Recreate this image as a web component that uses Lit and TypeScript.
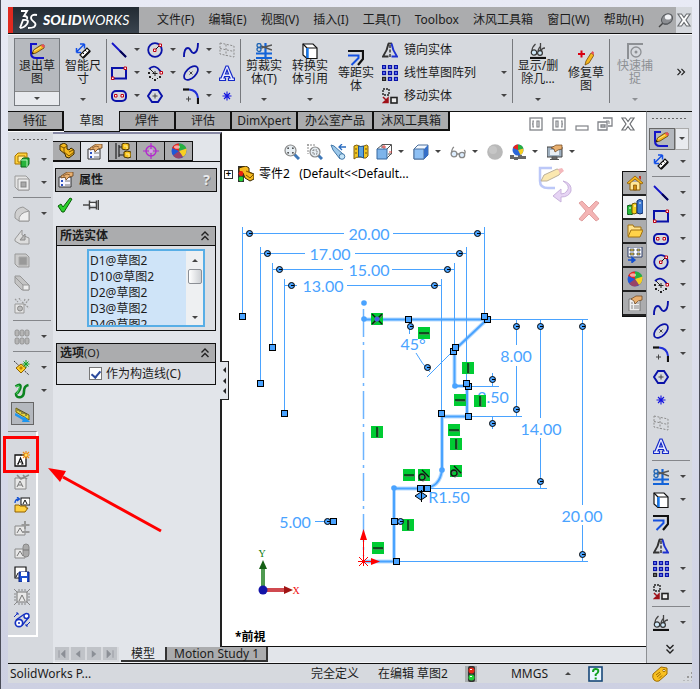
import { LitElement, html, css, svg, nothing } from "lit";
import { customElement } from "lit/decorators.js";
import { classMap } from "lit/directives/class-map.js";

const NAVY = "#0a12a8";

/* Icon bodies, each drawn on a 16 x 16 grid */
const ICONS: Record<string, unknown> = {
  exit: svg`<path d="M8 1H2v9q0 5 5 5h8" fill="none" stroke="#1414c8" stroke-width="2"/><path d="M3 11l1.500-4L12 2l3 0 0 3-8 5z" fill="#f5b820" stroke="#5a3a00" stroke-width=".8"/><path d="M12 2.500l2-1.500 2 2-1.500 2z" fill="#e8505a"/><path d="M3 11l.5-2 1.500 1.500z" fill="#111"/><path d="M5 8l7-4" stroke="#ffe680"/>`,
  dim: svg`<path d="M1.500 9L9 1.500M9.500 1v4.500M9.500 1H5M1.500 9.500V5M1.500 9.500H6" fill="none" stroke="#1450e6" stroke-width="1.500"/><path d="M5 12l7-7 3 3-7 7z" fill="#fff" stroke="#111" stroke-width="1.200"/><path d="M7.500 9.500L9 11M10 7l1.500 1.500" stroke="#111"/><path d="M8 15l7-7" stroke="#111" stroke-width="2"/>`,
  line: svg`<path d="M1 1l14 14" stroke="#1414c8" stroke-width="1.800"/><path d="M9 9l6 6" stroke="#050550" stroke-width="2"/>`,
  rect: svg`<rect x="1" y="3" width="14" height="10.500" fill="none" stroke="${NAVY}" stroke-width="2"/><path d="M13 2h2.500v2.500H13zM.5 12H3v2.500H.5z" fill="#fff" stroke="#c00010"/>`,
  slot: svg`<rect x="1" y="3" width="14" height="10" rx="4" fill="none" stroke="${NAVY}" stroke-width="2"/><path d="M3.500 6.500H6V9H3.500zM10 6.500h2.500V9H10z" fill="#fff" stroke="#c00010"/>`,
  circle: svg`<circle cx="8" cy="8" r="6.800" fill="none" stroke="${NAVY}" stroke-width="1.800"/><path d="M8 8l4-4" stroke="#111"/><path d="M6.500 7H9v2.500H6.500zM12 2h2.500v2.500H12z" fill="#fff" stroke="#c00010"/>`,
  arc: svg`<path d="M2 4q6-6 12 3" fill="none" stroke="${NAVY}" stroke-width="1.800"/><path d="M3 4l5 5M5.500 8.500h5M8 6v5" stroke="#222"/><path d="M13 6.500h2.500V9H13z" fill="#fff" stroke="#c00010"/><path d="M1 7h2v2H1zM2 11h2v2H2zM7 14h2v2H7zM12 11h2v2h-2zM5 13h1v1H5zM10 13h1v1h-1z" fill="#222"/>`,
  spline: svg`<path d="M1 15q0-9 4-9c3 0 3 6 6 5q4-1 4-10" fill="none" stroke="${NAVY}" stroke-width="1.900"/>`,
  ellipse: svg`<ellipse cx="8" cy="8" rx="8.500" ry="4.800" transform="rotate(-45 8 8)" fill="none" stroke="${NAVY}" stroke-width="1.700"/><path d="M6.500 6.500l3 3M9.500 6.500l-3 3" stroke="#333" stroke-width=".9"/>`,
  fillet: svg`<path d="M0 1.500h6" stroke="#111" stroke-width="2.200"/><path d="M6 1.500q8 .5 9 8.500" fill="none" stroke="#2030d8" stroke-width="2"/><path d="M15 10v6" stroke="#111" stroke-width="2.200"/><path d="M3 11h5M5.500 8.500v5" stroke="#444"/>`,
  polygon: svg`<path d="M5 2h6l4 6-4 6H5L1 8z" fill="none" stroke="${NAVY}" stroke-width="1.900"/><path d="M5.500 8h5M8 5.500v5" stroke="#444"/>`,
  point: svg`<path d="M8 3.500v9M3.500 8h9M5 5l6 6M11 5l-6 6" stroke="#1414e0" stroke-width="1.100"/>`,
  plane: svg`<path d="M1 1l14 3v11L1 12zM1 6.500l14 3M7 2.500v11" fill="none" stroke="#8c8c8c" stroke-dasharray="2 1.500"/>`,
  text: svg`<path d="M7 1h2l5 12h1.500v2.500H9.500V13H11l-.6-1.500H5.600L5 13h1.500v2.500H.5V13H2zM8 5L6.500 9h3z" fill="#e8ebff" stroke="#1428c8" stroke-width="1.200" fill-rule="evenodd"/>`,
  trim: svg`<path d="M0 10.500h16M0 15h16M9.500 0v16" stroke="#1464d8" stroke-width="2.200"/><path d="M5 5l11-3M5 3l11 4" stroke="#555" stroke-width="1.600"/><circle cx="3" cy="2.500" r="2" fill="#d6d9de" stroke="#1e64b4" stroke-width="1.300"/><circle cx="3" cy="6.500" r="2" fill="#d6d9de" stroke="#1e64b4" stroke-width="1.300"/>`,
  convert: svg`<path d="M1 1h10l4 4v10.500H5L1 12z" fill="#fff" stroke="#111" stroke-width="1.200"/><path d="M1 1l4 4v10.500M5 5h10" fill="none" stroke="#111" stroke-width="1.200"/><path d="M5.500 5v10" stroke="#1478f0" stroke-width="2.400"/>`,
  offset: svg`<path d="M0 1h15v8l-5 6" fill="none" stroke="#111" stroke-width="2.200"/><path d="M0 5.500h10.500v2.500l-7 7" fill="none" stroke="#1450e0" stroke-width="2"/>`,
  mirror: svg`<path d="M6.500 1.500Q5.500 8 1 14.500h5.500" fill="none" stroke="#333" stroke-width="1.900"/><path d="M6 1.500h4" stroke="#333" stroke-width="1.800"/><path d="M9.500 1.500Q10.500 8 15 14.500H9.500" fill="none" stroke="#1e32d0" stroke-width="1.900"/><path d="M8 3v13" stroke="#111" stroke-dasharray="3 1.500" stroke-width="1.200"/>`,
  pattern: svg`${[0, 6, 12].map((y) => [0, 6, 12].map((x) => svg`<rect x="${x + 0.5}" y="${y + 0.5}" width="3" height="3" fill="${x === 0 && y === 12 ? "#777" : "#6f86ff"}" stroke="${x === 0 && y === 12 ? "#222" : NAVY}" stroke-width="1.300"/>`))}`,
  move: svg`<rect x="1" y="1" width="6" height="6" fill="none" stroke="#222" stroke-width="1.400" stroke-dasharray="2 1"/><rect x="9" y="9.500" width="6" height="5.500" fill="#eee" stroke="#222" stroke-width="1.600"/><path d="M1 9l4 4M6 10v4.500H1.500z" fill="#a01018" stroke="#a01018" stroke-width="1.500"/>`,
  glasses: svg`<path d="M0 15h16" stroke="#111" stroke-width="2.200"/><path d="M2 8q0-4 3.500-7M8 8q1-4 3-5M11.500 8q0-3 3.500-3M10.500 0v9" fill="none" stroke="#444" stroke-width="1.300"/><circle cx="4" cy="9.500" r="2.700" fill="#cfe8f8" stroke="#333" stroke-width="1.200"/><circle cx="10" cy="10" r="2.400" fill="#cfe8f8" stroke="#333" stroke-width="1.200"/>`,
  repair: svg`<path d="M0 4h7M3.500 .5v7" stroke="#d80010" stroke-width="2"/><path d="M7 15l1-4 5-8 3 2-5 8z" fill="#f6b81e" stroke="#7a4a00" stroke-width=".8"/><path d="M13 3l1.500-2L16 2.500 15.500 5z" fill="#e8505a"/>`,
  snap: svg`<path d="M1 16V1h15" fill="none" stroke="#8d9094" stroke-width="2"/><circle cx="9" cy="9" r="5" fill="none" stroke="#8d9094" stroke-width="1.300"/><circle cx="9" cy="9" r="1.500" fill="#8d9094"/>`,
  boss: svg`<path d="M1 4l3-3h9v8l-2 3H1z" fill="#ffd23c" stroke="#a87400"/><path d="M4 4h7v6H4z" fill="#fff1a8" stroke="#a87400"/><path d="M7 8l2-2h6v6l-2 3H7z" fill="#28b43c" stroke="#08641a"/><path d="M7 8h6v7" fill="none" stroke="#b8f5c0"/>`,
  cutbox: svg`<path d="M1 1h11l3 3v11H4l-3-3z" fill="#e4e4e4" stroke="#9a9a9a"/><path d="M4 4h11v11H4z" fill="#ececec" stroke="#9a9a9a"/><rect x="7" y="7" width="5" height="5" fill="#aaa" stroke="#858585"/>`,
  round: svg`<path d="M1 8q1-6 8-7l6 4v10H5l-4-3z" fill="#d0d0d0" stroke="#989898"/><path d="M5 15q-1-8 10-10v10z" fill="#eee" stroke="#989898"/>`,
  rib: svg`<path d="M1 10l7-9v5l7 3v6H6l-5-3z" fill="#ddd" stroke="#989898"/><path d="M6 11l5-6v6z" fill="#bbb" stroke="#8a8a8a"/>`,
  shell: svg`<path d="M1 2h11l3 3v10H4l-3-3z" fill="#ccc" stroke="#999"/><path d="M5 5h8v8H5z" fill="#999" stroke="#aaa"/>`,
  draft: svg`<path d="M1 1h5l9 9v5H8L1 8z" fill="#c4c4c4" stroke="#979797"/><path d="M1 2l8 8h6v5H9v-5" fill="#eee" stroke="#979797"/>`,
  wizard: svg`<path d="M1 6h9v9H1z" fill="#e4e4e4" stroke="#999"/><circle cx="6" cy="10.500" r="2.500" fill="#bbb" stroke="#888"/><path d="M8 4l7 6M1 1l3 3M5 0l2 3M11 1l-1 3M15 1l-3 4" stroke="#999" stroke-width="1.200" stroke-dasharray="2 1"/>`,
  cyls: svg`${[0, 8].map((y) => [1, 6, 11].map((x) => svg`<rect x="${x}" y="${y + 1}" width="4" height="6" rx="1.500" fill="#b5b5b5" stroke="#888" stroke-width=".8"/>`))}`,
  refgeo: svg`<path d="M0 1l15 14" stroke="#333" stroke-dasharray="2 1"/><path d="M2 8l5-4 5 4-5 5z" fill="#ffd02c" stroke="#906000"/><path d="M7 6l2 2-2 2-2-2z" fill="#c08000"/><path d="M12 0v8M8.500 4h7M9.500 1.500l5 5M14.500 1.500l-5 5" stroke="#10a020"/>`,
  curve: svg`<path d="M1.500 3.500Q7 0 6.500 4T2 11q0 4 5 3 3-1 3-6t4.500-6" fill="none" stroke="#0d8420" stroke-width="2.600"/><path d="M2 3.500q4-2 3.500 1T2.500 11" fill="none" stroke="#52d868"/>`,
  instant: svg`<path d="M1 2l13 7v5L1 6z" fill="#e8d438" stroke="#6d6410"/><path d="M3 3v2M5 4v2M7 5v3M9 6v2M11 7v3" stroke="#444"/><path d="M0 8l10 6" stroke="#1c96f0" stroke-width="2.400"/><path d="M9 10l6 6-8 0z" fill="#1c96f0"/>`,
  part: svg`<path d="M1 2l4-2 3 2v4l2 1 2-2 3 2v4l-5 4-3-1-1-3-5-4z" fill="#f5b91e" stroke="#3a2800"/><path d="M1 3l4 2v4l5 4 5-4M5 5l3-2M10 9l4-2" fill="none" stroke="#7a5200"/>`,
  props: svg`<path d="M1 5h12v10H1z" fill="#f5f5ff" stroke="#333"/><path d="M3 8h2v2H3zM3 12h2v2H3z" fill="#2a50c0"/><path d="M7 9h5M7 13h5" stroke="#777"/><path d="M3 4l6-4 6 0v4l-4 1-3 3-1-3-4 1z" fill="#e8b070" stroke="#6a4018" stroke-width=".8"/><path d="M5 4l4-2 3 1" fill="none" stroke="#6a4018" stroke-width=".7"/>`,
  config: svg`<path d="M1 0v16M4 2v12M4 4h4M4 12h5" stroke="#222" stroke-width="1.200"/><path d="M7 1l3-1 4 1v5l-3 1-4-1zM9 9l3-1 4 1v5l-3 1-4-1z" fill="#f8c41c" stroke="#4a3400"/><path d="M9 3h3v3M11 11h3v3" fill="none" stroke="#fff0a0"/>`,
  target: svg`<circle cx="8" cy="8" r="5" fill="none" stroke="#b428d0" stroke-width="1.400"/><path d="M8 0v16M0 8h16" stroke="#b428d0" stroke-width="1.200"/><circle cx="8" cy="8" r="2" fill="#dba0ea"/>`,
  ball: svg`<circle cx="8" cy="8" r="7.500" fill="#1e58d8"/><path d="M8 8L1 5q2-4.500 7-4.500z" fill="#e8261c"/><path d="M8 8V.5q5 0 7.500 5L8 8z" fill="#28b040"/><path d="M8 8l7.500-2.500q.5 6-3.500 8.500z" fill="#f8d020"/><path d="M8 8l4 6q-6 3.500-10-1.500z" fill="#e8361c" opacity=".6"/><ellipse cx="6" cy="4" rx="3" ry="1.800" fill="#fff" opacity=".6"/>`,
  ok: svg`<path d="M1 9l3-2 2 3 7-9 2 1-8 13H5z" fill="#2ad02a" stroke="#0a600a"/>`,
  pin: svg`<path d="M0 8h6" stroke="#555" stroke-width="1.600"/><path d="M6.500 3.500v9M6.500 5.500h7v5h-7M13.500 3.500v9M15.500 3v10" fill="none" stroke="#444" stroke-width="1.500"/><path d="M7 7h5" stroke="#fff" stroke-width="1.500"/>`,
  blocknew: svg`<path d="M1 4h11v11H1z" fill="#fff" stroke="#111" stroke-width="1.300"/><path d="M3 13h2M7 13h2.500M4 13l2.500-6L9 13M5 11h3" fill="none" stroke="#111" stroke-width="1.100"/><path d="M12 0v8M8 4h8M9 1l6 6M15 1L9 7" stroke="#f08a10" stroke-width="1.200"/><circle cx="12" cy="4" r="1.500" fill="#ffe060"/>`,
  blockedit: svg`<path d="M1 4h11v11H1z" fill="#e8e8e8" stroke="#888"/><path d="M3 13l3-6 3 6M4 11h4" fill="none" stroke="#777"/><path d="M3 1l4 4 8-4M9 1l4 4" fill="none" stroke="#8a8a8a" stroke-width="1.600"/>`,
  blockopen: svg`<rect x="7" y="1" width="9" height="7" fill="#fff" stroke="#111"/><path d="M9 7l2-4 2 4" fill="none" stroke="#111"/><path d="M1 6q0-4 4-4M3 0l2.500 2L3 4" fill="none" stroke="#1450d0" stroke-width="1.300"/><path d="M1 15V8h4l1 1h6v2h2l-3 4z" fill="#ffd040" stroke="#906000"/>`,
  blockadd: svg`<path d="M1 6h10v9H1z" fill="#e8e8e8" stroke="#888"/><path d="M3 13l3-5 3 5" fill="none" stroke="#777"/><path d="M11 1v8M7.500 5h8M8 12h7.500" stroke="#999" stroke-width="2"/>`,
  blockbind: svg`<path d="M1 6h10v9H1z" fill="#e8e8e8" stroke="#888"/><path d="M3 13l3-5 3 5" fill="none" stroke="#777"/><rect x="9" y="1" width="6" height="13" rx="3" fill="#aaa" stroke="#888"/><path d="M9 7h6" stroke="#777"/>`,
  blocksave: svg`<path d="M1 1h11v11H1z" fill="#fff" stroke="#111" stroke-width="1.200"/><path d="M2 11l2-4" stroke="#111"/><path d="M5 6h10v10H5z" fill="#1e50d0" stroke="#0a1e78"/><path d="M7 6h6v4H7zM8 12h5v4H8z" fill="#fff"/>`,
  blockburst: svg`<path d="M3 3h10v10H3z" fill="#e8e8e8" stroke="#777"/><path d="M5 12l3-6 3 6" fill="none" stroke="#777"/><path d="M0 0l3 3M16 0l-3 3M0 16l3-3M16 16l-3-3M5 0v2M8 0v2M11 0v2M5 14v2M8 14v2M11 14v2M0 5h2M0 8h2M0 11h2M14 5h2M14 8h2M14 11h2" stroke="#888"/>`,
  belt: svg`<circle cx="5" cy="11" r="3.700" fill="#fff" stroke="#1430c0" stroke-width="1.700"/><circle cx="12.500" cy="4" r="2.500" fill="#fff" stroke="#1430c0" stroke-width="1.400"/><path d="M2 8l8.500-6M8 13.500L15 5" stroke="#1430c0" stroke-width="1.300"/><path d="M0 5l4-4M2 1h2v2M16 10l-4 4M12 12v2h2" fill="none" stroke="#1430c0"/><circle cx="5" cy="11" r="1" fill="#1430c0"/>`,
  zoomfit: svg`<path d="M10 10l5 5" stroke="#3f78b8" stroke-width="3"/><circle cx="6.500" cy="6.500" r="5.500" fill="#e6edf2" stroke="#888" stroke-width="1.200"/><path d="M4 5V4h1M8 4h1v1M9 8v1H8M5 9H4V8" fill="none" stroke="#333" stroke-width="1.200"/>`,
  zoomarea: svg`<path d="M0 1h8M1 0v10" stroke="#888" stroke-dasharray="2 1"/><path d="M11 11l4 4" stroke="#3f78b8" stroke-width="3"/><circle cx="8" cy="8" r="5" fill="#e6edf2" stroke="#888" stroke-width="1.200"/><path d="M6 6h4v4H6z" fill="none" stroke="#777" stroke-dasharray="1.500 1"/>`,
  prev: svg`<path d="M1 1l3 1 9 8-3 5-7-9z" fill="#9cc8ea" stroke="#4478a8"/><circle cx="12" cy="12.500" r="2.800" fill="#c4e4f8" stroke="#4478a8"/><path d="M9 3h7M12 0L9 3l3 3" fill="none" stroke="#2a6cc0" stroke-width="1.300"/>`,
  section: svg`<path d="M1 2q3-2 5 0t5 0 4 0v10q-2 3-4 2t-5-1-5 2z" fill="#f0c420" stroke="#806010"/><path d="M5.500 2v11q2-1 5 1V2q-3 1-5 0z" fill="#5aa2e0" stroke="#22548c"/><path d="M2 5h2M2 9h2M12 5h2M12 9h2" stroke="#7a5400"/>`,
  orient: svg`<path d="M6 4V.5h9.500V10H12M1 5l5-4M11 5l4-4M11 14l4-4" fill="none" stroke="#555"/><path d="M8 1v4M6 3h4M13 8h3" stroke="#d84040"/><path d="M1 5h10v10H1z" fill="#7eb4ea" stroke="#3668a0"/>`,
  display: svg`<path d="M1 5l4-4h10v10l-4 4H1z" fill="#f2f8ff" stroke="#4a6e9c"/><path d="M1 5h10v10H1z" fill="#8ec0f4" stroke="#4a6e9c"/><path d="M11 5l4-4v10l-4 4z" fill="#356fc8"/>`,
  hide: svg`<circle cx="4" cy="10" r="2.900" fill="#ddeeff" stroke="#888" stroke-width="1.300"/><circle cx="12" cy="11" r="2.700" fill="#ddeeff" stroke="#888" stroke-width="1.300"/><path d="M1.500 9Q2 4 4 3M7 10h2M14.500 10Q16 7 14 6" fill="none" stroke="#888" stroke-width="1.300"/>`,
  grayball: svg`<circle cx="8" cy="8" r="7.800" fill="#b9b9b9"/><circle cx="6" cy="6" r="4" fill="#c6c6c6"/>`,
  scene: svg`<path d="M0 11h4v4H0zM8 11h4v4H8zM12 12h4v3h-4zM4 12h4v4H4z" fill="#666"/><path d="M4 11h4v2H4z" fill="#eee"/><circle cx="8" cy="6" r="5.500" fill="#2c66d8"/><path d="M8 6L3 4q2-4 5-3.500z" fill="#e8261c"/><path d="M8 6V.5q4 0 5.500 4z" fill="#28b040"/><path d="M8 6l5.500-1.500q0 5-3 6.500z" fill="#f8d020"/>`,
  screen: svg`<path d="M0 3h15v10H0z" fill="#9fb0c0" stroke="#444"/><path d="M3 6h9v5H3z" fill="#e8eef5"/><path d="M5 13h5v2H5zM3 15.500h9" fill="#777" stroke="#555"/><path d="M4 4l5-3 6 0v4l-4 1-3 2-1-3z" fill="#e8b070" stroke="#6a4018" stroke-width=".7"/>`,
  home: svg`<path d="M3 7v8h10V7" fill="#ffe89a" stroke="#8a5a00"/><path d="M0 8l8-7 8 7-2 1-6-5-6 5z" fill="#f8b81c" stroke="#8a5a00" stroke-width=".8"/><path d="M6.500 10h3v5h-3z" fill="#d08c10" stroke="#7a4a00" stroke-width=".7"/><path d="M12 1h2v4l-2-2z" fill="#c03020"/>`,
  books: svg`<path d="M0 7l3-1 3 1v8l-3 1-3-1z" fill="#28b83c" stroke="#085018"/><path d="M5 5l3-1 2 1v9l-3 1-2-1z" fill="#f4d020" stroke="#705800"/><path d="M10 2l3-2 3 2v12l-3 1-3-1z" fill="#3c78d0" stroke="#102c68"/><path d="M2 9h2M7 7h2M12 4h2" stroke="#fff"/>`,
  folder: svg`<path d="M1 13V2h5l1 2h7v3" fill="#ffe28a" stroke="#a07010"/><path d="M1 14L4 7h12l-3 7z" fill="#ffd34a" stroke="#a07010"/>`,
  views: svg`<path d="M1 0h14v10H1z" fill="#fff" stroke="#2c3c68"/><path d="M3 2h4v2H3zM10 2h3v2h-3zM3 6h4v2H3zM10 6h3v2h-3z" fill="#f0c830" stroke="#2c3c68" stroke-width=".7"/><path d="M1 13h6M5 10.500L8 13l-3 2.500z" fill="#1450d0" stroke="#1450d0" stroke-width="1.400"/>`,
  sheet: svg`<path d="M2 4h11v12H2z" fill="#eee" stroke="#777"/><path d="M4 8h2M4 11h2M4 13h2M7 8h5M7 11h5M7 13h5" stroke="#888"/><path d="M4 4l5-3 6 0v4l-4 1-3 3-1-3z" fill="#e8b070" stroke="#6a4018" stroke-width=".7"/>`,
  tree: svg`<path d="M0 0h6v16H0z" fill="#333"/><circle cx="3" cy="7.500" r="2.200" fill="#e82010"/><path d="M1 2l3-1 4-1 3 2v4l5 2v5l-4 2-5-3-2-5-4-2z" fill="#f5b91e" stroke="#3a2800"/><circle cx="3" cy="7.500" r="2.400" fill="#e82010"/><circle cx="3" cy="13" r="2.400" fill="#20d030"/><path d="M8 5l7 3M8 9l4 3 3-3" fill="none" stroke="#7a5200"/>`,
  light: svg`<rect x="2" y="0" width="12" height="16" fill="#a9adae"/><rect x="5" y="0" width="7" height="16" rx="2" fill="#333"/><circle cx="8.500" cy="4.500" r="3" fill="#e42818"/><circle cx="8.500" cy="11.500" r="3" fill="#22d038"/><path d="M7 3.500h2M7 10.500h2" stroke="#fff"/>`,
  help: svg`<rect x="1" y="1" width="13" height="14" fill="#e8f6ff" stroke="#184878" stroke-width="1.600"/><path d="M5 6q0-3 2.700-3t2.600 2.300Q10.300 7 7.700 8.500v1.500M7.700 11.500v2" fill="none" stroke="#10a020" stroke-width="2"/>`,
  tag: svg`<path d="M1 8l8-7 6 1 0 6-8 7q-3 1-5-1t-1-6z" fill="#f8c020" stroke="#a06c00"/><circle cx="12" cy="4.500" r="1.200" fill="#fff" stroke="#a06c00"/><path d="M4 9l4-3M5 11l4-3.500M7 12.500l3-3" stroke="#a06c00"/>`,
  pushpin: svg`<path d="M1 15l5-5" stroke="#444" stroke-width="1.500"/><ellipse cx="9" cy="7" rx="6" ry="4.800" transform="rotate(-40 9 7)" fill="#8c8e92" stroke="#55585c"/><ellipse cx="10" cy="5" rx="3.200" ry="2.600" fill="#f2f3f6"/><path d="M6 12q4 1 6-2" stroke="#55585c" fill="none"/>`,
  close: svg`<path d="M2 2h3.500L8 5.500 10.500 2H14L10 8l4 6h-3.500L8 10.500 5.500 14H2l4-6z" fill="#fff" stroke="#6c6f73" stroke-width="1.200"/>`,
  paneL: svg`<rect x="2" y="2" width="12" height="12" fill="#fff" stroke="#808388" stroke-width="1.300"/><path d="M6 5H5v6h1M5 8H4M9 5h2v6H9z" fill="none" stroke="#808388" stroke-width="1.200"/>`,
  paneR: svg`<rect x="2" y="2" width="12" height="12" fill="#fff" stroke="#808388" stroke-width="1.300"/><path d="M10 5h1v6h-1M11 8h1M5 5h2v6H5z" fill="none" stroke="#808388" stroke-width="1.200"/>`,
  mini: svg`<rect x="2" y="10" width="12" height="4" fill="#fff" stroke="#808388" stroke-width="1.200"/>`,
  restore: svg`<path d="M6 2h9v8h-4M1 6h9v8H1zM4 9h4v2H4z" fill="none" stroke="#808388" stroke-width="1.300"/><path d="M9 5h3v3" fill="none" stroke="#808388"/>`,
  first: svg`<path d="M4 3v10M12 3L7 8l5 5z" fill="#8b8f96" stroke="#8b8f96"/>`,
  back: svg`<path d="M11 3L5 8l6 5z" fill="#8b8f96"/>`,
  next: svg`<path d="M5 3l6 5-6 5z" fill="#8b8f96"/>`,
  last: svg`<path d="M12 3v10M4 3l5 5-5 5z" fill="#8b8f96" stroke="#8b8f96"/>`,
  chevrons: svg`<path d="M4.500 7.500L8 4l3.500 3.500M4.500 12L8 8.500l3.500 3.500" fill="none" stroke="#222" stroke-width="1.400"/>`,
};

const icon = (name: string, cls = "") =>
  html`<svg class="icon ${cls}" viewBox="0 0 16 16" aria-hidden="true">${ICONS[name]}</svg>`;

/* Toolbar entries: [icon, label, has drop-down]; null is a separator */
type Tool = [string, string, boolean?] | null;

const SKETCH: Tool[] = [
  ["line", "直线", true], ["circle", "圆", true], ["spline", "样条曲线", true], ["plane", "基准面"],
  ["rect", "矩形", true], ["arc", "圆弧", true], ["ellipse", "椭圆", true], ["text", "文字"],
  ["slot", "槽口", true], ["polygon", "多边形"], ["fillet", "圆角", true], ["point", "点"],
];

const FEATURES: Tool[] = [
  ["boss", "拉伸凸台", true], ["cutbox", "拉伸切除", true], null,
  ["round", "圆角", true], ["rib", "筋"], ["shell", "抽壳"], ["draft", "拔模"], ["wizard", "异型孔向导"], null,
  ["cyls", "阵列", true], null,
  ["refgeo", "参考几何体", true], ["curve", "曲线", true],
];

const BLOCKS: Tool[] = [
  ["blocknew", "制作块"], ["blockedit", "编辑块"], ["blockopen", "插入块"], ["blockadd", "添加/移除"],
  ["blockbind", "重建块"], ["blocksave", "保存块"], ["blockburst", "爆炸块"], ["belt", "皮带/链"],
];

const RIGHT: Tool[] = [
  ["dim", "智能尺寸", true], null,
  ["line", "直线", true], ["rect", "矩形", true], ["slot", "槽口", true], ["circle", "圆", true],
  ["arc", "圆弧", true], ["spline", "样条曲线", true], ["ellipse", "椭圆", true], ["fillet", "圆角", true],
  ["polygon", "多边形"], ["point", "点"], ["plane", "基准面"], ["text", "文字"], null,
  ["trim", "剪裁实体", true], ["convert", "转换实体引用", true], ["offset", "等距实体"], ["mirror", "镜向实体"],
  ["pattern", "线性草图阵列", true], ["move", "移动实体", true], null,
  ["glasses", "显示/删除几何关系", true],
];

const HUD: Tool[] = [
  ["zoomfit", "整屏显示全图"], ["zoomarea", "局部放大"], ["prev", "上一视图"], ["section", "剖面视图"],
  ["orient", "视图定向", true], ["display", "显示样式", true], ["hide", "隐藏/显示项目", true],
  ["grayball", "编辑外观"], ["scene", "应用布景", true], ["screen", "视图设定", true],
];

/* Sketch geometry in window coordinates */
const THIN = [
  "M242.500 227V316M242 233.500H344M393 233.500H484M484.500 227V319",
  "M260.500 247V383M260 253.500H305M355 253.500H467M466.500 247V386",
  "M272.500 263V347M272 269.500H343M392 269.500H454M454.500 263V347",
  "M284.500 279V413M284 285.500H297M347 285.500H441M441.500 279V416",
  "M487 319.500H588M468 386.500H499M468 416.500H522M424 488.500H547M396 561.500H588",
  "M516.500 320V345M516.500 366V416M540.500 320V418M540.500 438V488M582.500 320V505M582.500 525V561",
  "M492.500 373V386M492.500 416V429M315 521.500H333M409.500 320V334",
].join("");
const THICK = "M363 319.500H487L454.500 350V386H467V416.500H442V470Q440 487 424 488.500H394V561.500H363";
const SQUARES = [
  [242, 316], [260, 383], [272, 347], [284, 413], [408, 319], [487, 319], [484, 316], [453, 351], [455, 347],
  [468, 386], [466, 383], [468, 416], [441, 413], [420, 488], [427, 488], [394, 521], [396, 561], [333, 521],
];
const HANDLES = [
  [249, 233], [477, 233], [267, 253], [459, 253], [279, 269], [447, 269], [291, 285], [434, 285], [410, 326],
  [516, 326], [540, 326], [582, 326], [516, 409], [540, 481], [582, 554], [492, 379], [492, 423], [427, 367],
  [327, 521], [400, 521],
];
const DOTS = [[364, 303], [364, 319], [455, 386], [442, 470], [394, 488]];
const RELATIONS: [number, number, string][] = [
  [377, 319, "M-5-5L5 5M5-5L-5 5"], [424, 333, "M-5 0H5"], [377, 432, "M0-5V5"], [468, 368, "M0-5V5"],
  [460, 400, "M-5 0H5"], [480, 401, "M0-5V5"], [454, 430, "M-5 0H5"], [456, 444, "M0-5V5"],
  [456, 471, "M-2-5L5 2M-5 2a3 3 0 1 0 6 0a3 3 0 1 0-6 0"], [409, 475, "M-5 0H5"],
  [424, 475, "M-2-5L5 2M-5 2a3 3 0 1 0 6 0a3 3 0 1 0-6 0"], [408, 525, "M0-5V5"], [378, 548, "M-5 0H5"],
];
const DIMS: [number, number, string][] = [
  [369, 240, "20.00"], [330, 260, "17.00"], [369, 276, "15.00"], [323, 292, "13.00"], [413, 350, "45°"],
  [516, 362, "8.00"], [493, 403, "2.50"], [541, 435, "14.00"], [582, 522, "20.00"], [449, 503, "R1.50"],
  [295, 528, "5.00"],
];

@customElement("app-root")
export class AppRoot extends LitElement {
  static styles = css`
    :host {
      display: flex;
      flex-direction: column;
      box-sizing: border-box;
      min-height: 100vh;
      border: solid #4a4c58;
      border-width: 0 1px;
      padding: 7px 7px 6px;
      background: linear-gradient(#e8eaf5, #e2e4f0 30%, #cdd0e2);
      color: #1c1c1c;
      font: 12px/16px "Noto Sans", "Noto Sans CJK SC", sans-serif;
      overflow: hidden;
    }
    * { box-sizing: border-box; }
    button, select, input { font: inherit; color: inherit; margin: 0; padding: 0; border: 0; background: none; }
    .icon { width: 16px; height: 16px; display: block; flex: none; }
    .caret { width: 0; height: 0; border: 3px solid transparent; border-top-color: #444; border-bottom: 0; flex: none; }
    .caret.up { border-top: 0; border-bottom: 3px solid #444; }

    .menubar { display: flex; align-items: stretch; height: 27px; background: #abacae; border-bottom: 1px solid #111; }
    .brand { display: flex; align-items: center; gap: 5px; width: 131px; padding-left: 5px; border-left: 5px solid #e02a20; background: linear-gradient(#222b33, #3a444e); color: #fff; font: italic 14px/16px Lato, sans-serif; }
    .brand svg { width: 20px; height: 20px; }
    .brand b { font-weight: 900; }
    .menus { flex: 1; display: flex; justify-content: space-between; align-items: center; padding: 0 14px 0 18px; }
    .menus button { white-space: nowrap; }
    .sys { display: flex; align-items: center; gap: 2px; }
    .sys button:last-child { background: #d6d9de; align-self: stretch; display: grid; place-items: center; }

    .ribbon { display: flex; align-items: stretch; height: 77px; padding: 3px 4px 5px 6px; background: #d6d9de; border-top: 1px solid #f4f5f8; line-height: 13px; }
    .big { width: 46px; display: flex; flex-direction: column; align-items: center; padding: 5px 2px 0; }
    .big .label { width: 40px; text-align: center; word-break: break-all; }
    .big.wide { width: 50px; }
    .big.wide .label { width: 44px; }
    .big .drop { display: grid; place-items: center; height: 14px; margin-top: auto; align-self: stretch; }
    .big.low { padding-top: 12px; }
    .big.off { color: #8d9094; }
    .big.off .caret { border-top-color: #8d9094; }
    .big.pressed { background: #b6b9be; border: 1px solid #777b80; padding: 4px 1px 0; }
    .big.pressed .drop { margin: auto -1px 0; background: #e8eaee; border-top: 1px solid #888; }
    .rule { width: 1px; background: #77797d; margin: 1px 0 3px; }
    .sketch { display: grid; grid-template-columns: repeat(3, 36px) 20px; grid-template-rows: repeat(3, 23px); padding-left: 4px; width: 133px; }
    .split { display: flex; align-items: center; gap: 7px; }
    .list { width: 133px; display: grid; grid-template-rows: repeat(3, 23px); padding: 0 5px 0 3px; }
    .list button { display: flex; align-items: center; gap: 6px; text-align: left; }
    .list .caret, .more { margin-left: auto; }
    .more .icon { width: 14px; height: 14px; transform: rotate(90deg); }
    .more { align-self: center; }

    .body { flex: 1; display: flex; }
    .left { flex: 1; display: flex; flex-direction: column; min-width: 0; border-top: 1px solid #111; background: #fff; }
    .tabs { display: flex; align-items: flex-start; height: 20px; }
    .tabs button.tab { height: 19px; border: solid #111; border-width: 0 2px 2px 0; background: #abacae; line-height: 16px; white-space: nowrap; }
    .tabs .tab.on { height: 21px; margin-top: -1px; background: #d6d9de; position: relative; border-width: 0 1px 1px 0; }
    .w56 { width: 56px; } .w66 { width: 66px; } .w76 { width: 76px; }
    .winbtns { margin-left: auto; align-self: flex-end; display: flex; gap: 7px; padding-right: 10px; }
    .cols { flex: 1; display: flex; min-height: 0; }
    .side { width: 45px; background: #d6d9de; padding-top: 6px; }
    .grip { height: 3px; margin: 0 4px; background: radial-gradient(circle, #666 1px, transparent 1px) 0 0 / 4px 3px; }
    .side .grip { margin-bottom: 7px; }
    .cell { display: flex; align-items: center; height: 23px; gap: 11px; padding-left: 6px; }
    .hr { height: 8px; padding: 3px 2px 0 5px; }
    .hr::before { content: ""; display: block; height: 1px; background: #85878b; }
    .side .toggle { display: block; margin: 0 3px 6px; width: 23px; height: 23px; padding: 3px; background: #b4b8be; border: 1px solid #666; }
    .blocks { position: relative; width: 30px; padding: 15px 0 4px; border-top: 1px solid #888; border-right: 2px solid #fff; border-bottom: 2px solid #fff; }
    .mark { position: absolute; z-index: 3; left: -5px; top: 4px; width: 160px; height: 110px; overflow: visible; pointer-events: none; }
    .center { flex: 1; display: flex; flex-direction: column; min-width: 0; }
    .work { flex: 1; display: flex; min-height: 0; }

    .panel { position: relative; width: 169px; background: #e2e5ea; border-top: 2px solid #8688a4; border-right: 2px solid #222; padding-top: 7px; }
    .ptabs { display: flex; border-bottom: 1px solid #111; height: 21px; }
    .ptabs button { width: 28px; height: 20px; background: #abacae; border: 1px solid #111; border-left-width: 0; display: grid; place-items: center; }
    .ptabs button.on { background: #e2e5ea; border-bottom: 0; height: 21px; }
    .ptitle { display: flex; align-items: center; gap: 5px; height: 24px; margin: 6px 3px 0 2px; padding: 0 6px 0 2px; background: #abacae; border: 1px solid #111; font-weight: 700; }
    .ptitle span { flex: 1; }
    .ptitle button { font-size: 14px; font-weight: 700; color: #e8eaec; text-shadow: 1px 1px #777; }
    .actions { display: flex; gap: 10px; padding: 5px 4px 13px; }
    .group { margin: 0 4px 12px 3px; border: 1px solid #111; background: #dcdfe4; }
    .group h2 { display: flex; align-items: center; justify-content: space-between; margin: 0; height: 19px; padding: 0 2px 0 3px; background: #abacae; border-bottom: 1px solid #111; font: 700 12px/16px "Noto Sans", "Noto Sans CJK SC", sans-serif; }
    .group h2 small { font-size: 11px; font-weight: 400; }
    .listbox { display: flex; margin: 3px 10px 3px 30px; height: 78px; border: 2px solid #58aee6; background: #cfe4f8; }
    .listbox select { flex: 1; min-width: 0; height: 74px; overflow: hidden; outline: none; appearance: none; font-size: 12px; }
    .listbox option { height: 16px; min-height: 16px; line-height: 16px; padding: 0 1px; }
    .bar { width: 17px; background: #eef0f2; display: flex; flex-direction: column; align-items: center; padding: 8px 0 6px; }
    .thumb { width: 14px; height: 15px; margin: 7px 0 auto; border: 1px solid #8b8f95; border-radius: 2px; background: linear-gradient(90deg, #fff, #cdd0d4); }
    .check { display: flex; align-items: center; gap: 4px; height: 21px; padding-left: 32px; }
    .check input { appearance: none; width: 13px; height: 13px; border: 1px solid #777; background: #fff; display: grid; place-items: center; }
    .check input:checked::after { content: ""; width: 4px; height: 7px; border: solid #2c4a9c; border-width: 0 2px 2px 0; transform: rotate(40deg); }
    .handle { position: absolute; z-index: 2; right: -9px; top: 227px; width: 9px; height: 39px; background: #e2e5ea; border: solid #222; border-width: 1px 1px 1px 0; display: flex; flex-direction: column; align-items: center; justify-content: space-evenly; }
    .handle i { border: 3px solid transparent; border-right-color: #222; border-left: 0; }

    .view { position: relative; flex: 1; min-width: 0; background: #fff; border-bottom: 1px solid #111; display: flex; flex-direction: column; }
    .canvas { position: absolute; inset: 0; width: 100%; height: 100%; }
    .canvas .dim { font: 16px Lato, sans-serif; fill: #4aa3ff; text-anchor: middle; }
    .canvas .axis { font: 10px "Liberation Serif", serif; text-anchor: middle; }
    .hud { position: relative; display: flex; align-items: center; height: 23px; margin: 8px 0 0 62px; }
    .hud .cell { padding: 0; width: 23px; gap: 6px; }
    .hud .cell.more-w { width: 37px; }
    .feature { position: relative; display: flex; align-items: center; gap: 5px; height: 22px; padding-left: 2px; white-space: pre; color: #000; }
    .feature button { width: 9px; height: 9px; border: 1px solid #333; font: 700 9px/7px "Liberation Sans", sans-serif; }
    .corner { position: absolute; right: 46px; top: 34px; display: flex; align-items: flex-start; gap: 6px; }
    .corner svg { display: block; }
    .corner button:last-child { margin-top: 34px; }
    .tasks { position: absolute; right: 0; top: 39px; width: 24px; border: solid #111; border-width: 1px 0 1px 1px; }
    .tasks button { display: grid; place-items: center; width: 23px; height: 24px; background: #abacae; border-bottom: 2px solid #222; }
    .tasks button.on { background: #eef0f3; }
    .viewname { position: relative; margin: auto 0 1px 13px; font-weight: 700; color: #000; }

    .docs { display: flex; height: 16px; background: #e2e5ea; border-bottom: 1px solid #f4f5f8; }
    .docs button { background: #abacae; border: 1px solid #333; border-width: 0 2px 2px 0; padding: 0 7px; line-height: 13px; }
    .docs .nav { display: grid; place-items: center; width: 16px; padding: 0; background: #c0c3c8; border-color: #d8dade; }
    .docs .nav .icon { width: 12px; height: 12px; }
    .docs .nav:first-child { margin-left: 2px; }
    .docs .on { background: #e2e5ea; padding: 0 10px; margin-left: 2px; }

    .right { width: 46px; background: #d6d9de; border-top: 1px solid #111; border-left: 1px solid #8d9094; padding-top: 5px; }
    .right .grip { margin-bottom: 7px; }
    .right .exit { height: 23px; margin: 0 3px 0 2px; padding: 0; gap: 0; }
    .exit button:first-child { width: 26px; height: 22px; padding: 2px 3px; background: #b4b8be; border: 1px solid #666; }
    .exit button:last-child { flex: 1; height: 22px; display: grid; place-items: center; background: #e8eaee; border: 1px solid #aaa; }
    .expand { display: block; margin: 7px auto 0; transform: rotate(180deg); }

    .status { display: flex; align-items: center; height: 20px; background: #d6d9de; border-top: 1px solid #111; padding-left: 2px; }
    .status .app { flex: 1; }
    .status .def { width: 67px; } .status .edit { width: 85px; }
    .status .units { margin: 0 17px 0 32px; }
    .status .up { margin-right: 17px; }
    .status .help { margin-right: 48px; }
    .status .size { width: 10px; height: 10px; margin: 4px 0 0 14px; background: radial-gradient(circle, #999 1px, transparent 1px) 0 0 / 4px 4px; clip-path: polygon(100% 0, 100% 100%, 0 100%); }
  `;

  private strip(tools: Tool[], hud = false) {
    return tools.map((t) =>
      t
        ? html`<div class=${classMap({ cell: true, "more-w": hud && !!t[2] })}>
            <button aria-label=${t[1]}>${icon(t[0])}</button>${t[2] ? html`<span class="caret"></span>` : nothing}
          </div>`
        : html`<div class="hr"></div>`
    );
  }

  private big(name: string, label: string, cls = "", drop = true) {
    return html`<button class="big ${cls}">${icon(name)}<span class="label">${label}</span>${
      drop ? html`<span class="drop"><span class="caret"></span></span>` : nothing
    }</button>`;
  }

  private drawing() {
    return html`<svg class="canvas" aria-label="草图2">
      <g transform="translate(-222 -132)">
        <path d=${THICK} fill="none" stroke="#b9dcff" stroke-width="4" />
        <path d=${THICK} fill="none" stroke="#4aa3ff" stroke-width="2" />
        <path d=${THIN} fill="none" stroke="#4aa3ff" />
        <path d="M363.500 309V556" stroke="#6db4ff" stroke-width="1.500" stroke-dasharray="28 5 3 5" />
        <path d="M416 353Q422 364 430 372M427 377L453 351" fill="none" stroke="#4aa3ff" />
        ${DOTS.map(([x, y]) => svg`<circle cx=${x} cy=${y} r="2.800" fill="#4aa3ff"/>`)}
        ${DIMS.map(([x, y, t]) => svg`<text class="dim" x=${x} y=${y}>${t}</text>`)}
        ${RELATIONS.map(
          ([x, y, d]) => svg`<g transform="translate(${x} ${y})"><path d="M-6-6H6V6H-6z" fill="#00cc33"/><path d=${d} transform="translate(1 1)" fill="none" stroke="#666"/><path d=${d} fill="none" stroke="#111" stroke-width="1.300"/></g>`
        )}
        <circle cx="377" cy="319" r="2.500" fill="#4a60e0" />
        ${SQUARES.map(([x, y]) => svg`<rect x=${x - 2.5} y=${y - 2.5} width="6" height="6" fill="#4aa3ff" stroke="#000"/>`)}
        ${HANDLES.map(([x, y]) => svg`<circle cx=${x + 0.5} cy=${y + 0.5} r="3" fill="#4aa3ff" stroke="#000"/><path d="M${x} ${y + 0.5}h3" stroke="#000"/>`)}
        <path d="M415 496l6-4 6 4-6 4zM421.500 490v12" fill="#4aa3ff" stroke="#000" />
        <path d="M363.500 561V540M363 561.500H372M359 557l9 9M368 557l-9 9M363.500 556v10M358 561.500h10" stroke="#f00" />
        <path d="M363.500 529l3.500 11h-7zM380 561.500l-9-3.500v7z" fill="#f00" />
        <path d="M263 588V568" stroke="#4f9a50" stroke-width="4" /><path d="M263 560l4 9h-8z" fill="#156015" />
        <path d="M266 590h18" stroke="#d04a50" stroke-width="4" /><path d="M293 590l-9-4v8z" fill="#a01414" />
        <circle cx="263" cy="590" r="4.500" fill="#1414a8" />
        <text class="axis" x="262" y="557" fill="#0a780a">Y</text>
        <text class="axis" x="296" y="594" fill="#f01010">X</text>
      </g>
    </svg>`;
  }

  render() {
    const menus = ["文件(F)", "编辑(E)", "视图(V)", "插入(I)", "工具(T)", "Toolbox", "沐风工具箱", "窗口(W)", "帮助(H)"];
    const tabs: [string, string][] = [
      ["特征", "w56"], ["草图", "w56 on"], ["焊件", "w56"], ["评估", "w56"],
      ["DimXpert", "w66"], ["办公室产品", "w76"], ["沐风工具箱", "w76"],
    ];
    return html`
      <header class="menubar">
        <div class="brand">
          <svg viewBox="0 0 20 20" aria-hidden="true"><path d="M3 1h6l-3 5q4 0 3 3M2 18l3-8q7-1 4 4-3 4-7 4M19 5q-6-1-6 3 0 2 3 4t0 5q-2 1-6 1" fill="none" stroke="#fff" stroke-width="1.900" /></svg>
          <span><b>SOLID</b>WORKS</span>
        </div>
        <nav class="menus">${menus.map((m) => html`<button>${m}</button>`)}</nav>
        <div class="sys">
          <button aria-label="固定菜单">${icon("pushpin")}</button>
          <button aria-label="关闭">${icon("close")}</button>
        </div>
      </header>

      <section class="ribbon">
        ${this.big("exit", "退出草图", "pressed")} ${this.big("dim", "智能尺寸")}
        <div class="rule"></div>
        <div class="sketch">
          ${SKETCH.map((t) => t && html`<div class="split"><button aria-label=${t[1]}>${icon(t[0])}</button>${t[2] ? html`<span class="caret"></span>` : nothing}</div>`)}
        </div>
        <div class="rule"></div>
        ${this.big("trim", "剪裁实体(T)")} ${this.big("convert", "转换实体引用")} ${this.big("offset", "等距实体", "low", false)}
        <div class="list">
          <button>${icon("mirror")}镜向实体</button>
          <button>${icon("pattern")}线性草图阵列<span class="caret"></span></button>
          <button>${icon("move")}移动实体<span class="caret"></span></button>
        </div>
        <div class="rule"></div>
        ${this.big("glasses", "显示/删除几...", "wide")} ${this.big("repair", "修复草图", "low", false)}
        <div class="rule"></div>
        ${this.big("snap", "快速捕捉", "wide off")}
        <button class="more" aria-label="更多">${icon("chevrons")}</button>
      </section>

      <div class="body">
        <div class="left">
          <div class="tabs">
            ${tabs.map(([t, c]) => html`<button class="tab ${c}">${t}</button>`)}
            <div class="winbtns">
              ${["paneL", "paneR", "mini", "restore", "close"].map((n) => html`<button aria-label=${n}>${icon(n)}</button>`)}
            </div>
          </div>
          <div class="cols">
            <aside class="side">
              <div class="grip"></div>
              ${this.strip(FEATURES)}
              <button class="toggle" aria-label="Instant3D">${icon("instant")}</button>
              <div class="blocks">
                ${this.strip(BLOCKS)}
                <svg class="mark" aria-hidden="true">
                  <rect x="1.500" y="1.500" width="33" height="34" fill="none" stroke="#f00" stroke-width="3" />
                  <path d="M158 95L60 41" stroke="#f00" stroke-width="3" /><path d="M45 32l18 3-6 11z" fill="#f00" />
                </svg>
              </div>
            </aside>
            <div class="center">
              <div class="work">
                <section class="panel">
                  <div class="ptabs">
                    ${["part", "props", "config", "target", "ball"].map((n) => html`<button class=${classMap({ on: n === "props" })} aria-label=${n}>${icon(n)}</button>`)}
                  </div>
                  <div class="ptitle">${icon("props")}<span>属性</span><button>?</button></div>
                  <div class="actions">
                    <button aria-label="确定">${icon("ok")}</button><button aria-label="保持可见">${icon("pin")}</button>
                  </div>
                  <div class="group">
                    <h2>所选实体${icon("chevrons")}</h2>
                    <div class="listbox">
                      <select multiple size="4" aria-label="所选实体">
                        ${["D1", "D10", "D2", "D3", "D4"].map((d) => html`<option>${d}@草图2</option>`)}
                      </select>
                      <div class="bar"><span class="caret up"></span><span class="thumb"></span><span class="caret"></span></div>
                    </div>
                  </div>
                  <div class="group">
                    <h2><span>选项<small>(O)</small></span>${icon("chevrons")}</h2>
                    <label class="check"><input type="checkbox" checked />作为构造线(C)</label>
                  </div>
                  <div class="handle"><i></i><i></i><i></i></div>
                </section>
                <main class="view">
                  ${this.drawing()}
                  <div class="hud">${this.strip(HUD, true)}</div>
                  <div class="feature"><button aria-label="展开">+</button>${icon("tree")}<span>零件2   (Default&lt;&lt;Default...</span></div>
                  <div class="corner">
                    <button aria-label="退出草图">
                      <svg width="34" height="38" viewBox="0 0 34 38"><path d="M14 2H2v13q0 7 8 7h7" fill="none" stroke="#bcc8f8" stroke-width="2.500" /><path d="M3 15l3-6L19 3l5 2-3 4-12 6z" fill="#fbe8b0" stroke="#bbb09a" /><path d="M20 3l4-1 2 3-4 3z" fill="#f4b8bc" /><path d="M25 15q8 5 4 10-2 3-6 3v-5l-8 7 8 6v-5q8 0 10-6 1-8-8-10z" fill="#e6d4f4" stroke="#c8b2dc" /></svg>
                    </button>
                    <button aria-label="取消">
                      <svg width="22" height="22" viewBox="0 0 22 22"><path d="M1 3l3-2 7 7 7-7 3 2-7 8 7 8-3 2-7-7-7 7-3-2 7-8z" fill="#f4b4b4" stroke="#e0a0a0" /></svg>
                    </button>
                  </div>
                  <div class="tasks">
                    ${["home", "books", "folder", "views", "ball", "sheet"].map((n) => html`<button class=${classMap({ on: n === "books" })} aria-label=${n}>${icon(n)}</button>`)}
                  </div>
                  <div class="viewname">*前視</div>
                </main>
              </div>
              <div class="docs">
                ${["first", "back", "next", "last"].map((n) => html`<button class="nav" aria-label=${n}>${icon(n)}</button>`)}
                <button class="on">模型</button><button>Motion Study 1</button>
              </div>
            </div>
          </div>
        </div>
        <aside class="right">
          <div class="grip"></div>
          <div class="cell exit"><button aria-label="退出草图">${icon("exit")}</button><button aria-label="更多"><span class="caret"></span></button></div>
          ${this.strip(RIGHT)}
          <button class="expand" aria-label="展开">${icon("chevrons")}</button>
        </aside>
      </div>

      <footer class="status">
        <span class="app">SolidWorks P...</span><span class="def">完全定义</span><span class="edit">在编辑 草图2</span>
        ${icon("light")}<span class="units">MMGS</span><span class="caret up"></span>
        <span class="help">${icon("help")}</span>${icon("tag")}<span class="size"></span>
      </footer>
    `;
  }
}
